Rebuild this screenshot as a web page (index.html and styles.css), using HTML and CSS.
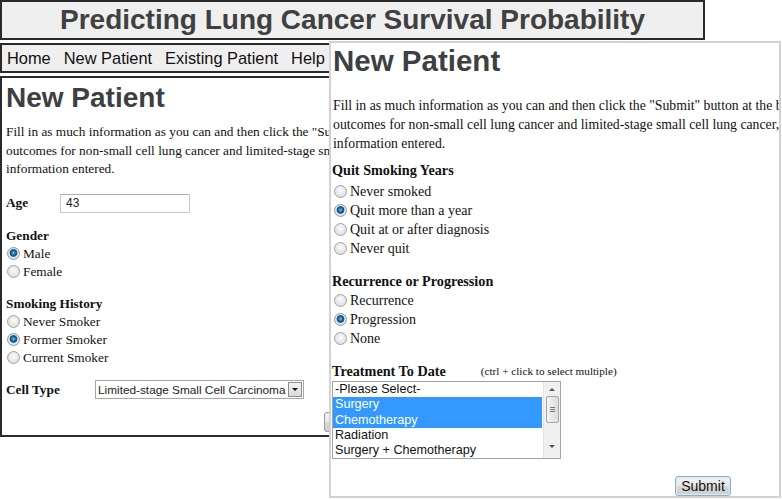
FILE: index.html
```html
<!DOCTYPE html>
<html>
  <head>
    <title>Predicting Lung Cancer Survival Probability</title>
    <link rel="stylesheet" href="styles.css">
  </head>
  <body>

    <div class="site">
      <div class="masthead">Predicting Lung Cancer Survival Probability</div>
      <div class="nav">
        <a href="#">Home</a>
        <a href="#">New Patient</a>
        <a href="#">Existing Patient</a>
        <a href="#">Help</a>
      </div>
      <div class="panel">
        <h1>New Patient</h1>
        <p class="intro">Fill in as much information as you can and then click the "Submit" button at the bottom of the page. The model will estimate survival<br>outcomes for non-small cell lung cancer and limited-stage small cell lung cancer, based on the<br>information entered.</p>

        <div class="field-row">
          <label class="field-label" for="age">Age</label>
          <input class="text-input" id="age" value="43">
        </div>

        <div class="group">
          <h3>Gender</h3>
          <label class="option"><input type="radio" class="radio" name="gender" checked> Male</label>
          <label class="option"><input type="radio" class="radio" name="gender"> Female</label>
        </div>

        <div class="group">
          <h3>Smoking History</h3>
          <label class="option"><input type="radio" class="radio" name="hist"> Never Smoker</label>
          <label class="option"><input type="radio" class="radio" name="hist" checked> Former Smoker</label>
          <label class="option"><input type="radio" class="radio" name="hist"> Current Smoker</label>
        </div>

        <div class="field-row cell-row">
          <span class="field-label cell-label">Cell Type</span>
          <div class="dropdown">
            <span class="dropdown-text">Limited-stage Small Cell Carcinoma</span>
            <span class="dropdown-btn"><span class="arrow-down"></span></span>
          </div>
        </div>

        <button class="submit back-submit">Submit</button>
      </div>
    </div>

    <!-- second window, scrolled further down the same form -->
    <div class="popup">
      <h1>New Patient</h1>
      <p class="intro">Fill in as much information as you can and then click the "Submit" button at the bottom of the page. The model will estimate survival<br>outcomes for non-small cell lung cancer and limited-stage small cell lung cancer, based on the<br>information entered.</p>

      <div class="group quit">
        <h3>Quit Smoking Years</h3>
        <label class="option"><input type="radio" class="radio" name="quit"> Never smoked</label>
        <label class="option"><input type="radio" class="radio" name="quit" checked> Quit more than a year</label>
        <label class="option"><input type="radio" class="radio" name="quit"> Quit at or after diagnosis</label>
        <label class="option"><input type="radio" class="radio" name="quit"> Never quit</label>
      </div>

      <div class="group">
        <h3>Recurrence or Progression</h3>
        <label class="option"><input type="radio" class="radio" name="rec"> Recurrence</label>
        <label class="option"><input type="radio" class="radio" name="rec" checked> Progression</label>
        <label class="option"><input type="radio" class="radio" name="rec"> None</label>
      </div>

      <div class="group">
        <div class="treat-head">
          <h3>Treatment To Date</h3>
          <span class="hint">(ctrl + click to select multiple)</span>
        </div>
        <div class="listbox">
          <ul class="list-options">
            <li>-Please Select-</li>
            <li class="selected">Surgery</li>
            <li class="selected">Chemotherapy</li>
            <li>Radiation</li>
            <li>Surgery + Chemotherapy</li>
          </ul>
          <div class="scrollbar">
            <span class="arrow-up"></span>
            <span class="thumb"><i></i><i></i><i></i></span>
            <span class="arrow-down small"></span>
          </div>
        </div>
      </div>

      <button class="submit front-submit">Submit</button>
    </div>

  </body>
</html>
```

FILE: styles.css
```css
body { margin: 0; width: 782px; height: 500px; overflow: hidden; position: relative; background: #fff; font-family: "Liberation Serif", serif; color: #111; }

.site { width: 705px; }

.masthead { height: 36px; border: 2px solid #2a2a2a; background: #efefef; display: flex; align-items: center; justify-content: center; font: bold 28px "Liberation Sans", Arial, sans-serif; color: #404040; }

.nav { margin-top: 3px; height: 26px; border: 2px solid #2a2a2a; background: #efefef; display: flex; align-items: center; gap: 13px; padding-left: 5px; font: 16.4px "Liberation Sans", Arial, sans-serif; }
.nav a { color: #111; text-decoration: none; }

.panel { margin-top: 3px; height: 357px; border: 2px solid #2a2a2a; padding-left: 4px; overflow: hidden; }

h1 { margin: 4px 0 0; font: bold 28px/32px "Liberation Sans", Arial, sans-serif; color: #3d4043; }
h3 { margin: 0; font-size: 13.3px; line-height: 18px; font-weight: bold; }

.intro { margin: 9px 0 0; font-size: 13.3px; line-height: 18.5px; white-space: nowrap; }

.field-row { display: flex; align-items: center; margin-top: 15px; }
.field-label { width: 54px; flex-shrink: 0; font-weight: bold; font-size: 13.3px; }
.text-input { width: 130px; height: 19px; box-sizing: border-box; border: 1px solid #c8c8c8; border-top-color: #b0b0b0; padding: 0 5px; font: 12px "Liberation Sans", Arial, sans-serif; color: #222; }

.group { margin-top: 14px; }
.option { display: flex; align-items: center; height: 18px; font-size: 13.3px; white-space: nowrap; }

.radio { appearance: none; -webkit-appearance: none; width: 13px; height: 13px; margin: 0 3px 0 1px; box-sizing: border-box; border: 1px solid #a2a2a2; border-radius: 50%; background: radial-gradient(circle at 50% 40%, #fbfbfb, #d6d6d6); }
.radio:checked { background: radial-gradient(circle at 50% 45%, #9ad0f2 0, #2a78b0 1.6px, #0f4d80 3.3px, #d8e3ea 4.3px, #ececec 100%); border-color: #8e98a0; }

.cell-row { margin-top: 13px; height: 20px; }
.cell-label { width: 89px; }
.dropdown { width: 209px; height: 19px; flex-shrink: 0; box-sizing: border-box; border: 1px solid #a6a6a6; display: flex; align-items: center; justify-content: space-between; padding-left: 2px; font: 11.8px "Liberation Sans", Arial, sans-serif; color: #222; white-space: nowrap; }
.dropdown-btn { width: 14px; height: 15px; margin-right: 1px; flex-shrink: 0; box-sizing: border-box; border: 1px solid #8c8c8c; background: linear-gradient(#f4f4f4, #d9d9d9); display: flex; align-items: center; justify-content: center; }
.arrow-down { width: 0; height: 0; border-left: 3px solid transparent; border-right: 3px solid transparent; border-top: 3px solid #111; }
.arrow-up { width: 0; height: 0; border-left: 3px solid transparent; border-right: 3px solid transparent; border-bottom: 3px solid #555; }

.submit { height: 20px; padding: 0 6px; border: 1px solid #8cb0cc; border-radius: 3px; background: linear-gradient(#f3f3f3 0, #e8e8e8 50%, #d8d8d8 51%, #cfcfcf 100%); font: 14px "Liberation Sans", Arial, sans-serif; color: #111; box-shadow: inset 0 0 0 1px #d6eefa; }
.back-submit { margin: 12px 0 0 318px; border-color: #9a9a9a; box-shadow: none; }

.popup { position: absolute; left: 329px; top: 41px; width: 452px; height: 457px; box-sizing: border-box; border: 2px solid #d2d2d2; background: #fff; overflow: hidden; padding-left: 2px; }
.popup h1 { margin-top: 1px; font-size: 29.5px; line-height: 34px; }
.popup .intro { margin-top: 18px; font-size: 13.75px; line-height: 19px; }
.popup h3 { font-size: 14.2px; line-height: 19px; margin-left: -1px; }
.popup .option { height: 19px; font-size: 14px; }
.popup .radio { margin-right: 3px; }
.popup .group { margin-top: 14px; }
.popup .quit { margin-top: 8px; }
.popup .quit h3 { margin-bottom: 2px; }

.treat-head { display: flex; align-items: center; }
.hint { margin-left: 35px; font-size: 11.2px; margin-top: -2px; }

.listbox { margin: 0 0 0 -1px; width: 229px; height: 78px; box-sizing: border-box; border: 1px solid #a3a3a3; display: flex; font: 12.6px "Liberation Sans", Arial, sans-serif; color: #111; }
.list-options { list-style: none; margin: 0; padding: 0; width: 209px; }
.list-options li { height: 15.3px; line-height: 15.3px; padding-left: 2px; white-space: nowrap; }
.list-options li.selected { background: #3399ff; color: #fff; }
.scrollbar { width: 16px; margin-left: 1px; display: flex; flex-direction: column; align-items: center; background: #f0f0f0; border-left: 1px solid #e2e2e2; }
.scrollbar .arrow-up { margin-top: 6px; }
.thumb { margin-top: 5px; width: 13px; height: 27px; box-sizing: border-box; border: 1px solid #a8a8a8; border-radius: 2px; background: linear-gradient(90deg, #f4f4f4, #dcdcdc); display: flex; flex-direction: column; align-items: center; justify-content: center; gap: 1px; }
.thumb i { display: block; width: 5px; height: 1px; background: #777; }
.arrow-down.small { margin-top: 22px; border-top-color: #555; }

.front-submit { margin: 17px 0 0 342px; width: 56px; padding: 0; }
```
